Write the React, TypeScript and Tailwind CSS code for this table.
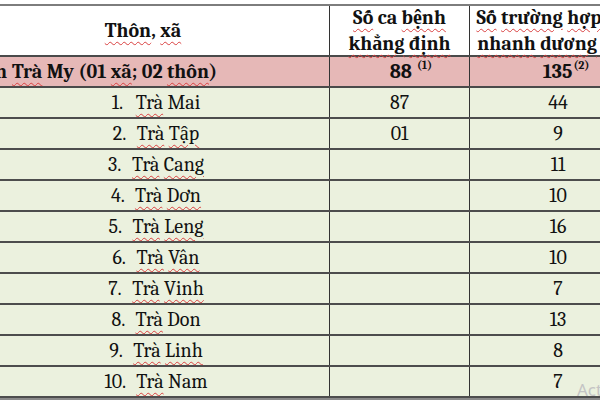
import React from "react";

const rows = [
  { n: 1, name: "Mai", sq: false, a: "87", b: "44" },
  { n: 2, name: "Tập", sq: true, a: "01", b: "9" },
  { n: 3, name: "Cang", sq: true, a: "", b: "11" },
  { n: 4, name: "Dơn", sq: true, a: "", b: "10" },
  { n: 5, name: "Leng", sq: true, a: "", b: "16" },
  { n: 6, name: "Vân", sq: true, a: "", b: "10" },
  { n: 7, name: "Vinh", sq: true, a: "", b: "7" },
  { n: 8, name: "Don", sq: false, a: "", b: "13" },
  { n: 9, name: "Linh", sq: true, a: "", b: "8" },
  { n: 10, name: "Nam", sq: false, a: "", b: "7" },
];

// spell-check squiggle, like Word
const W = ({ children }: { children: React.ReactNode }) => (
  <span className="underline decoration-wavy decoration-[#d94040] decoration-1 underline-offset-[4px]">{children}</span>
);

const App = () => {
  return (
    <div className="relative w-[600px] h-[400px] overflow-hidden bg-white text-[#111] font-serif [font-family:Liberation_Serif,serif]">
      <div className="-ml-[43px] pt-[4px] w-[700px]">
        {/* header */}
        <div className="flex h-[53px] border-t-2 border-b-2 border-t-[#7d7d7d] border-b-[#4a4a4a] bg-white font-bold text-[20px] leading-[26px]">
          <div className="w-[373px] shrink-0 border-r border-[#333] flex items-center justify-center">
            <span>
              <W>Thôn</W>, <W>xã</W>
            </span>
          </div>
          <div className="w-[140px] shrink-0 border-r border-[#333] flex flex-col items-center justify-center whitespace-nowrap">
            <span>
              <W>Số</W> ca <W>bệnh</W>
            </span>
            <span>
              <W>khẳng</W> <W>định</W>
            </span>
          </div>
          <div className="w-[176px] shrink-0 flex flex-col items-center justify-center whitespace-nowrap">
            <span>
              <W>Số</W> <W>trường</W> <W>hợp</W> test
            </span>
            <span>
              <W>nhanh</W> <W>dương</W> <W>tính</W>
            </span>
          </div>
        </div>

        {/* district total */}
        <div className="flex h-[31px] border-b-2 border-[#4a4a4a] bg-[#e6b8b7] font-bold text-[20px]">
          <div className="w-[373px] shrink-0 border-r border-[#333] flex items-center whitespace-nowrap">
            <span className="w-[50px] shrink-0 flex justify-end">Huyện Nam</span>
            <span className="ml-[5px]">
              <W>Trà</W> My (01 <W>xã</W>; 02 <W>thôn</W>)
            </span>
          </div>
          <div className="w-[140px] shrink-0 border-r border-[#333] flex items-center justify-center pl-[23px]">
            88<sup className="ml-[5px] text-[12px] -top-[7px]">(1)</sup>
          </div>
          <div className="w-[176px] shrink-0 flex items-center justify-center pl-[16px]">
            135<sup className="ml-[1px] text-[12px] -top-[7px]">(2)</sup>
          </div>
        </div>

        {rows.map((r) => (
          <div key={r.n} className="flex h-[31px] border-b-2 border-[#4d4d4d] bg-[#ebf1de] text-[20px]">
            <div className="w-[373px] shrink-0 border-r border-[#333] flex items-center justify-center pl-[26px] whitespace-nowrap">
              <span className={r.n >= 10 ? "min-w-[18px] mr-[10px]" : "min-w-[18px] mr-[6px]"}>{r.n}.</span>
              <span>
                <W>Trà</W> {r.sq ? <W>{r.name}</W> : r.name}
              </span>
            </div>
            <div className="w-[140px] shrink-0 border-r border-[#333] flex items-center justify-center">{r.a}</div>
            <div className="w-[176px] shrink-0 flex items-center justify-center">{r.b}</div>
          </div>
        ))}
        <div className="h-[2px] bg-[#8a8a8a]" />
      </div>

      <div className="absolute left-[577px] top-[377px] whitespace-nowrap font-sans text-[17px] text-[#c4c4c4]">
        Activate Windows
      </div>
    </div>
  );
};

export default App;
